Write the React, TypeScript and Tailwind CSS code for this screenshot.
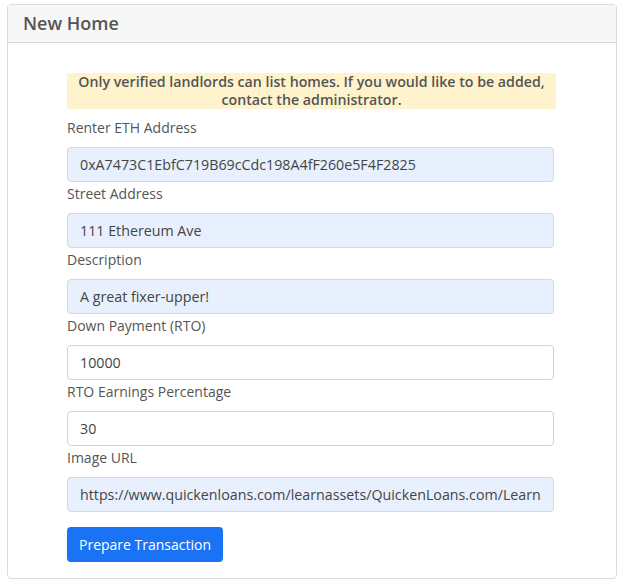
const FIELDS = [
  { label: "Renter ETH Address", value: "0xA7473C1EbfC719B69cCdc198A4fF260e5F4F2825", filled: true },
  { label: "Street Address", value: "111 Ethereum Ave", filled: true },
  { label: "Description", value: "A great fixer-upper!", filled: true },
  { label: "Down Payment (RTO)", value: "10000", filled: false },
  { label: "RTO Earnings Percentage", value: "30", filled: false },
  {
    label: "Image URL",
    value: "https://www.quickenloans.com/learnassets/QuickenLoans.com/Learning%20Center%20Images/Stock-Home-Fixer-Upper.jpg",
    filled: true,
  },
];

export default function App() {
  return (
    <div className="h-[585px] w-[624px] bg-white px-[7px] pt-[4px] font-['Open_Sans',sans-serif] text-[#444]">
      <div className="flex h-[575px] flex-col rounded border border-[#dcdcdc]">
        <div className="flex h-[38px] items-center border-b border-[#d6d6d6] bg-[#f7f7f7] px-[15px]">
          <h2 className="text-[18px] font-semibold text-[#555]">New Home</h2>
        </div>
        <div className="flex flex-col pt-[30px] pl-[59px] pr-[60px]">
          <div className="flex h-[36px] flex-col items-center justify-center bg-[#fff3cd] text-center text-[14.2px] font-semibold leading-[18px] text-[#555]">
            <span>Only verified landlords can list homes. If you would like to be added,</span>
            <span>contact the administrator.</span>
          </div>
          <div className="mt-[8px] mr-[2px] flex flex-col">
            {FIELDS.map((f) => (
              <div key={f.label} className="mb-px flex flex-col">
                <label className="text-[14px] leading-[22px] text-[#555]">{f.label}</label>
                <input
                  readOnly
                  value={f.value}
                  className={
                    "mt-[8px] h-[35px] w-full rounded border px-[12px] text-[14.25px] text-[#444] outline-none " +
                    (f.filled ? "border-[#cfd8e3] bg-[#e8f0fe]" : "border-[#ced4da] bg-white")
                  }
                />
              </div>
            ))}
          </div>
          <div className="mt-[14px]">
            <button className="h-[35px] rounded bg-[#1a73f5] px-[12px] text-[14px] text-white">
              Prepare Transaction
            </button>
          </div>
        </div>
      </div>
    </div>
  );
}
